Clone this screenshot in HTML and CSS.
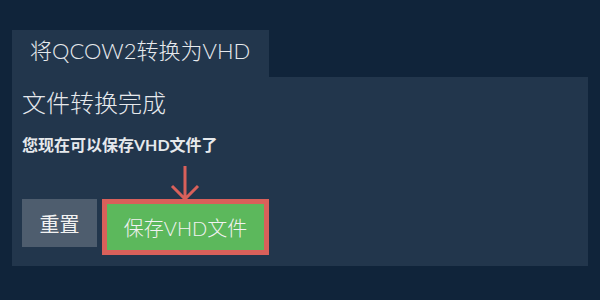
FILE: index.html
```html
<!DOCTYPE html>
<html lang="zh">
<head>
<meta charset="utf-8">
<link rel="stylesheet" href="styles.css">
</head>
<body>
<div class="page">
  <div class="tab">将QCOW2转换为VHD</div>
  <div class="panel">
    <h2 class="title">文件转换完成</h2>
    <p class="note">您现在可以保存VHD文件了</p>
    <div class="actions">
      <button class="btn btn-reset">重置</button>
      <div class="highlight">
        <svg class="arrow" width="30" height="36" viewBox="0 0 30 36">
          <path d="M15 1 V34 M2 21 L15 34 L28 21" fill="none" stroke="#d9605a" stroke-width="3"/>
        </svg>
        <button class="btn btn-save">保存VHD文件</button>
      </div>
    </div>
  </div>
</div>
</body>
</html>
```

FILE: styles.css
```css
html, body {
  margin: 0;
  padding: 0;
  background: #10243a;
}
body {
  width: 600px;
  height: 300px;
  overflow: hidden;
  font-family: "Lato", "Noto Sans CJK SC", sans-serif;
  color: #e6e9ec;
}
.page {
  padding: 30px 12px 0 12px;
}
.tab {
  display: inline-block;
  background: #22364c;
  height: 47px;
  line-height: 42px;
  padding: 0 19px 0 18px;
  font-size: 22px;
  font-weight: 300;
  vertical-align: top;
}
.panel {
  background: #22364c;
  height: 189px;
  box-sizing: border-box;
  padding: 10px 10px 10px 10px;
}
.title {
  margin: 0;
  font-weight: 300;
  font-size: 24px;
  line-height: 32px;
}
.note {
  margin: 16px 0 0 0;
  font-weight: bold;
  font-size: 16px;
  line-height: 20px;
}
.actions {
  display: flex;
  align-items: flex-start;
  gap: 5px;
  margin-top: 44px;
}
.btn {
  font-family: "Lato", "Noto Sans CJK SC", sans-serif;
  font-size: 20px;
  color: #f2f2f2;
  border: none;
  margin: 0;
  cursor: pointer;
}
.btn-reset {
  background: #4e5d6e;
  width: 75px;
  height: 48px;
  padding: 0;
}
.highlight {
  position: relative;
  border: 5px solid #d9605a;
  display: flex;
}
.btn-save {
  background: #5cb85c;
  width: 157px;
  height: 46px;
  padding: 0;
  font-weight: 300;
}
.arrow {
  position: absolute;
  left: 50%;
  margin-left: -16px;
  bottom: 100%;
  margin-bottom: 3px;
  display: block;
}
```
